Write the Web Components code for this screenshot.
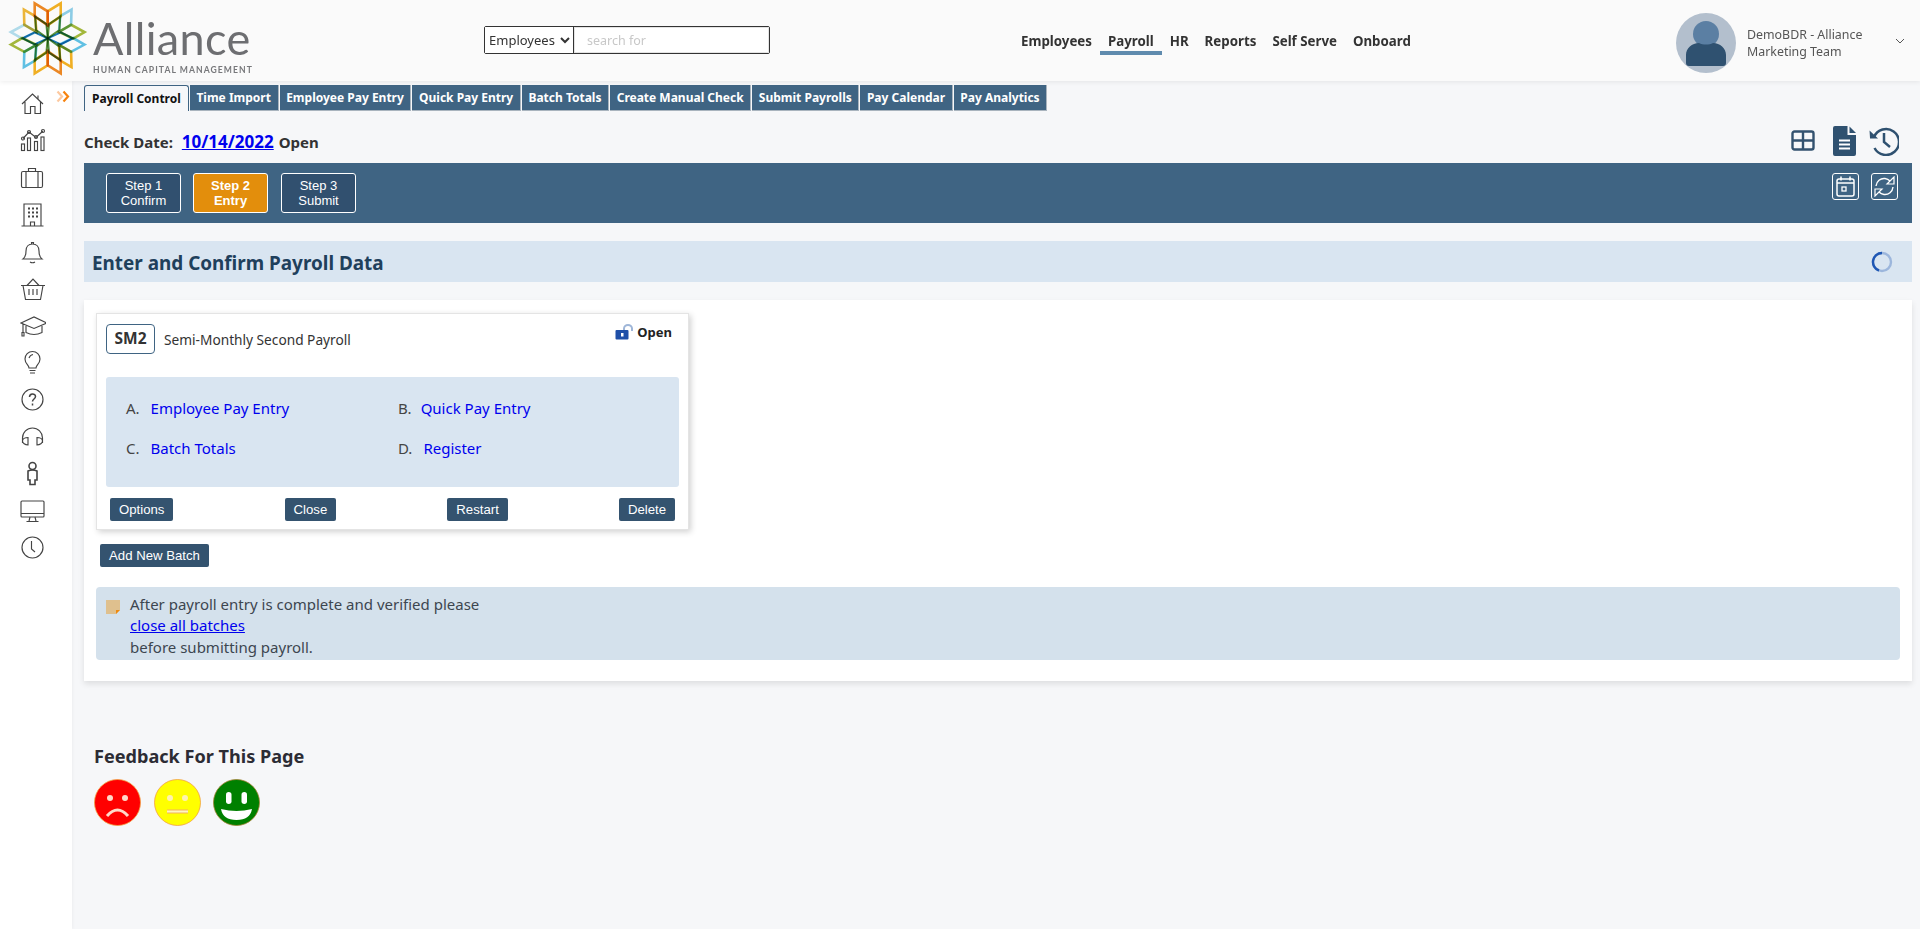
<!DOCTYPE html>
<html lang="en">

<head>
  <meta charset="UTF-8">
  <title>Payroll Control</title>
  <style>
    html, body { margin: 0; padding: 0; height: 100%; }
    body { background: #f6f7f9; font-family: "Noto Sans", "Liberation Sans", sans-serif; color: #333; overflow: hidden; }
  </style>
</head>

<body>
  <app-shell>
    <app-header slot="header"></app-header>
    <side-nav slot="side"></side-nav>
    <tab-bar></tab-bar>
    <check-row></check-row>
    <step-bar></step-bar>
    <section-band>Enter and Confirm Payroll Data</section-band>
    <work-panel>
      <batch-card code="SM2" name="Semi-Monthly Second Payroll"></batch-card>
      <dark-btn class="add">Add New Batch</dark-btn>
      <note-box></note-box>
    </work-panel>
    <page-feedback></page-feedback>
  </app-shell>

  <script>
    // small helper, every element just gets a shadow root with its html
    function shadowOf(el, html) {
      el.attachShadow({ mode: 'open' }).innerHTML = html;
    }

    class AppShell extends HTMLElement {
      connectedCallback() {
        shadowOf(this, `
          <style>
            :host { display: grid; grid-template-columns: 72px 1fr; grid-template-rows: 81px 1fr; height: 929px; }
            .top { grid-column: 1 / 3; position: relative; z-index: 2; }
            .main { padding: 4px 8px 0 12px; min-width: 0; }
          </style>
          <div class="top"><slot name="header"></slot></div>
          <slot name="side"></slot>
          <div class="main"><slot></slot></div>`);
      }
    }

    class AppHeader extends HTMLElement {
      connectedCallback() {
        // 12 petals: one parallelogram and its mirror, each turned in 60deg steps
        const yellowSet = ['#f5b324', '#a6bb3c', '#f5b324', '#f5b324', '#a6bb3c', '#f0b93a'];
        const orangeSet = ['#f08a24', '#8fd0ea', '#62c4e8', '#f08a24', '#62c4e8', '#b4e0ef'];
        let petals = '';
        for (let i = 0; i < 6; i++) {
          petals += `<use href="#petal" stroke="${yellowSet[i]}" transform="rotate(${i * 60})"/>`;
          petals += `<use href="#petal" stroke="${orangeSet[i]}" transform="rotate(${i * 60}) scale(-1 1)"/>`;
        }
        const inner = [[30, '#5f9a3e'], [150, '#4f8f3e'], [90, '#1a7db8']]
          .map(p => `<use href="#inner" stroke="${p[1]}" transform="rotate(${p[0]})"/>`).join('');
        shadowOf(this, `
          <style>
            :host { display: flex; align-items: flex-start; height: 81px; background: #fafafa; box-shadow: 0 1px 5px rgba(0,0,0,.08); }
            .logo { width: 260px; height: 81px; flex: none; display: flex; }
            .logo svg { width: 93px; height: 81px; flex: none; }
            .logo use { mix-blend-mode: multiply; }
            .brand { display: flex; flex-direction: column; padding-top: 15px; }
            .brand b { font: 400 45px/46px Lato, sans-serif; color: #6d6e71; letter-spacing: .35px; }
            .brand i { font: 700 8.600px/10px Lato, sans-serif; color: #77787b; letter-spacing: 1.050px; margin-top: 4px; white-space: nowrap; }
            .search { margin: 26px 0 0 224px; width: 286px; height: 28px; box-sizing: border-box; border: 1px solid #333; border-radius: 2px; display: flex; background: #fff; flex: none; }
            .search select { width: 89px; border: 0; border-right: 1px solid #333; background: #fff; font: 13px "Noto Sans", sans-serif; color: #333; padding: 0; outline: none; }
            .search input { flex: 1; min-width: 0; border: 1px solid #e4e4e4; font: 12.500px "Noto Sans", sans-serif; padding: 0 12px; outline: none; }
            .search input::placeholder { color: #c8c8c8; }
            nav { margin: 31px 0 0 251px; display: flex; gap: 16px; flex: none; font: 700 13.300px/20px "Noto Sans", sans-serif; color: #333; }
            nav span { position: relative; padding-bottom: 4px; white-space: nowrap; }
            nav .on::after { content: ""; position: absolute; left: -8px; right: -8px; bottom: 0; height: 4px; background: #5f8bae; }
            .user { margin: 13px 0 0 auto; display: flex; align-items: center; flex: none; height: 60px; padding-right: 15px; }
            .user svg.pic { width: 60px; height: 60px; }
            .user div { width: 132px; margin: 0 16px 0 11px; font: 12.400px/17px "Noto Sans", sans-serif; color: #555; }
            .user svg.chev { margin-top: -4px; }
          </style>
          <div class="logo">
            <svg viewBox="0 0 93 81">
              <defs>
                <path id="petal" d="M13 -35 V-22 L0 -13 V-27 Z" fill="none" stroke-width="2.600"/>
                <path id="inner" d="M0 0 L-6 -13 L0 -25 L6 -13 Z M0 0 L-6 13 L0 25 L6 13 Z" fill="none" stroke-width="2"/>
              </defs>
              <g transform="translate(47.700 38.300)">${petals}${inner}</g>
            </svg>
            <div class="brand"><b>Alliance</b><i>HUMAN CAPITAL MANAGEMENT</i></div>
          </div>
          <div class="search">
            <select><option>Employees</option></select>
            <input placeholder="search for">
          </div>
          <nav><span>Employees</span><span class="on">Payroll</span><span>HR</span><span>Reports</span><span>Self Serve</span><span>Onboard</span></nav>
          <div class="user">
            <svg class="pic" viewBox="0 0 60 60">
              <circle cx="30" cy="30" r="30" fill="#b3bfcd"/>
              <circle cx="30" cy="21" r="13" fill="#5b7fa3"/>
              <path d="M10 50 v-8 c0-7 6-12 13-12 c4 2 10 2 14 0 c7 0 13 5 13 12 v8 q0 3 -3 3 h-34 q-3 0 -3 -3z" fill="#2f5170"/>
            </svg>
            <div>DemoBDR - Alliance Marketing Team</div>
            <svg class="chev" width="10" height="6" viewBox="0 0 10 6"><path d="M1 1l4 4 4-4" fill="none" stroke="#555" stroke-width="1"/></svg>
          </div>`);
      }
    }

    class SideNav extends HTMLElement {
      connectedCallback() {
        const ic = [
          // home
          '<path d="M2 13 12.500 3 23 13M18 4.500v3.500M5 11v11.500h5.500v-7h4.500v7h5.500V11"/>',
          // chart
          '<g transform="translate(0 -2)"><path d="M3 12.500 9 6l7 5.500L23 5"/><circle cx="3" cy="12.500" r="1.500"/><circle cx="9" cy="6" r="1.500"/><circle cx="16" cy="11" r="1.500"/><circle cx="23" cy="5" r="1.500"/><rect x="1.500" y="18" width="3" height="6.500"/><rect x="7.500" y="12" width="3" height="12.500"/><rect x="14.500" y="15.500" width="3" height="9"/><rect x="21" y="11" width="3" height="13.500"/></g>',
          // briefcase
          '<rect x="1.500" y="6.500" width="21" height="16" rx="1.500"/><path d="M8.500 6.500V3.500h7v3M6 6.500v16M18 6.500v16"/>',
          // building
          '<path d="M4 24V2h17v22M1.500 24h22M10.500 24v-4h4v4"/><path stroke-width="2" d="M8 6.500h2M12 6.500h2M16 6.500h2M8 10.500h2M12 10.500h2M16 10.500h2M8 14.500h2M12 14.500h2M16 14.500h2"/>',
          // bell
          '<path d="M3 20c2.500-2 3-4 3-8 0-4 2.500-7 6.500-7s6.500 3 6.500 7c0 4 .5 6 3 8zM11.500 5V3.500h2V5M10 23q2.500 1.500 5 0"/>',
          // basket
          '<path d="M1 9.500h24M3 9.500l2.500 14h15l2.500-14M7 9.500 13 3l6 6.500M9 13v6M13 13v6M17 13v6"/>',
          // graduation cap
          '<path d="M1 10 14 4l13 6-13 5.500zM6 13v6.500q8 4 16 0V13M3 11v8.500M2 23v-3.500h2V23z"/>',
          // bulb
          '<path d="M9 18c0-3-4-4-4-9a7.500 7.500 0 0 1 15 0c0 5-4 6-4 9zM9.500 20.500h6M10 23h5"/><path d="M9 8q1-3 4-3.500"/>',
          // help
          '<circle cx="12.500" cy="12.500" r="10.500"/><path stroke-width="1.500" d="M9.500 10c0-4 6-4 6-.5 0 2.500-3 2.500-3 5M12.500 16.500v2"/>',
          // headphones
          '<path d="M2.500 19v-5a10 10 0 0 1 20 0v5M2.500 17c0-2 2.500-3.500 5.500-3.500V21c-3 0-5.500-2-5.500-4zM22.500 17c0-2-2.500-3.500-5.500-3.500V21c3 0 5.500-2 5.500-4z"/>',
          // person
          '<g stroke-width="1.600"><circle cx="12.500" cy="5" r="3.500"/><path d="M8 10q4.500-2 9 0v9h-2v4.500h-5V19H8z"/></g>',
          // monitor
          '<rect x="1" y="3" width="23" height="16" rx="1"/><path d="M1 15.500h23M10 19l-1 4M15 19l1 4M6.500 23.500h12"/>',
          // clock
          '<circle cx="12.500" cy="12.500" r="10.500"/><path d="M11.500 6v8l3.500 3"/>'
        ];
        shadowOf(this, `
          <style>
            :host { display: block; background: #fff; position: relative; box-shadow: 1px 0 3px rgba(0,0,0,.04); }
            ul { list-style: none; margin: 0; padding: 10px 0 0 20px; display: flex; flex-direction: column; gap: 11px; }
            li { width: 26px; height: 26px; }
            svg { display: block; width: 26px; height: 26px; fill: none; stroke: #444; stroke-width: 1.150; }
            .arrows { position: absolute; left: 56px; top: 9px; width: 14px; height: 13px; }
          </style>
          <svg class="arrows" viewBox="0 0 14 13" style="stroke-width:2.200">
            <path d="M1.500 1.500 6 6.500 1.500 11.500" stroke="#fdc9a0"/>
            <path d="M7.500 1.500 12 6.500 7.500 11.500" stroke="#f7830f"/>
          </svg>
          <ul>${ic.map(p => `<li><svg viewBox="0 0 26 26">${p}</svg></li>`).join('')}</ul>`);
      }
    }

    class TabBar extends HTMLElement {
      connectedCallback() {
        const tabs = ['Payroll Control', 'Time Import', 'Employee Pay Entry', 'Quick Pay Entry', 'Batch Totals',
          'Create Manual Check', 'Submit Payrolls', 'Pay Calendar', 'Pay Analytics'];
        shadowOf(this, `
          <style>
            :host { display: flex; gap: 1px; height: 26px; }
            span { box-sizing: border-box; height: 26px; padding: 0 6.600px; background: #3f6483; color: #fff; font: 700 12px/25px "Noto Sans", sans-serif; white-space: nowrap; border: 1px solid #a9b4be; border-width: 0 1px 1px 0; }
            span.on { background: #f6f7f9; color: #111; border: 1px solid #3f6483; border-bottom: 0; border-radius: 3px 3px 0 0; padding: 0 7px; }
          </style>
          ${tabs.map((t, i) => `<span class="${i ? '' : 'on'}">${t}</span>`).join('')}`);
      }
    }

    class CheckRow extends HTMLElement {
      connectedCallback() {
        shadowOf(this, `
          <style>
            :host { display: flex; align-items: flex-start; height: 52px; font: 700 15px/20px "Noto Sans", sans-serif; color: #333; }
            .txt { margin-top: 21px; white-space: nowrap; }
            a { color: #0000ee; font-size: 17px; margin: 0 1px 0 5px; }
            .icons { margin: 17px 13px 0 auto; display: flex; align-items: flex-start; }
            svg { display: block; }
          </style>
          <div class="txt">Check Date: <a href="#">10/14/2022</a> Open</div>
          <div class="icons">
            <svg width="24" height="22" viewBox="0 0 24 22" style="margin:2px 18px 0 0" fill="none" stroke="#33526f" stroke-width="2.400"><rect x="1.500" y="1.500" width="21" height="18" rx="2"/><path d="M1 10.500h22M12 1v19"/></svg>
            <svg width="23" height="30" viewBox="0 0 23 30" style="margin:-2px 13px 0 0"><path d="M2 0h12.500v9H23v19q0 2-2 2H2q-2 0-2-2V2q0-2 2-2z" fill="#2f5170"/><path d="M16.500 0.500 23 7h-6.500z" fill="#2f5170"/><path d="M6 14.500h11M6 18.500h11M6 22.500h11" stroke="#fff" stroke-width="2"/></svg>
            <svg width="30" height="30" viewBox="0 0 30 30" style="margin-top:-2px" fill="none" stroke="#2f5170"><path stroke-width="2.500" d="M5 11a13 13 0 1 1 .5 11"/><path d="M0.500 4.500 9 12.500H1z" fill="#2f5170" stroke="none"/><path stroke-width="2.500" d="M15 7v9l6 5"/></svg>
          </div>`);
      }
    }

    class StepBar extends HTMLElement {
      connectedCallback() {
        shadowOf(this, `
          <style>
            :host { display: flex; align-items: flex-start; height: 60px; background: #3f6483; box-sizing: border-box; padding: 10px 14px 0 22px; }
            .st { box-sizing: border-box; width: 75px; height: 40px; margin-right: 12px; border: 1px solid #fff; border-radius: 3px; background: #31506f; color: #fff; text-align: center; font: 13px/15px "Liberation Sans", sans-serif; padding-top: 4px; }
            .st.on { background: #e38e0c; font-weight: 700; margin-right: 13px; }
            .tools { margin-left: auto; display: flex; gap: 12px; }
            .tools span { box-sizing: border-box; width: 27px; height: 27px; border: 1px solid #fff; border-radius: 3px; display: flex; align-items: center; justify-content: center; }
          </style>
          <div class="st">Step 1<br>Confirm</div>
          <div class="st on">Step 2<br>Entry</div>
          <div class="st">Step 3<br>Submit</div>
          <div class="tools">
            <span><svg width="19" height="21" viewBox="0 0 19 21" fill="none" stroke="#fff" stroke-width="1.500"><rect x="1" y="3" width="17" height="17" rx="2"/><path d="M1 7h17M5 0.500v4M14 0.500v4"/><rect x="6" y="11" width="4" height="4" stroke-width="1.300"/></svg></span>
            <span><svg width="21" height="21" viewBox="0 0 21 21" fill="none" stroke="#fff" stroke-width="1.400"><path d="M2 10c.5-5 4.500-8 9-7.500q3 .5 5 2.500M19 11c-.5 5-4.500 8-9 7.500q-3-.5-5-2.500"/><path d="M20 1v7h-7zM1 20v-7h7z" stroke-width="1.200"/></svg></span>
          </div>`);
      }
    }

    class SectionBand extends HTMLElement {
      connectedCallback() {
        shadowOf(this, `
          <style>
            :host { display: flex; align-items: center; justify-content: space-between; box-sizing: border-box; height: 41px; margin-top: 18px; padding: 2px 19px 0 8px; background: #d9e5f1; color: #1f405c; font: 700 18.900px/24px "Noto Sans", sans-serif; }
            svg { margin-top: -2px; }
          </style>
          <slot></slot>
          <svg width="22" height="22" viewBox="0 0 22 22" fill="none" stroke-width="2.400"><circle cx="11" cy="11" r="9" stroke="#9cb6dc"/><path d="M11 2a9 9 0 0 0-3 17.500" stroke="#1f57b4"/></svg>`);
      }
    }

    class WorkPanel extends HTMLElement {
      connectedCallback() {
        shadowOf(this, `
          <style>
            :host { display: block; box-sizing: border-box; height: 381px; margin-top: 18px; padding: 13px 12px 0; background: #fff; box-shadow: 0 3px 6px rgba(0,0,0,.1); }
            ::slotted(.add) { margin: 14px 0 20px 4px; }
          </style>
          <slot></slot>`);
      }
    }

    class BatchCard extends HTMLElement {
      connectedCallback() {
        shadowOf(this, `
          <style>
            :host { display: block; box-sizing: border-box; width: 593px; height: 217px; padding: 10px 9px 0; border: 1px solid #e4e4e4; background: #fff; box-shadow: 2px 2px 6px rgba(0,0,0,.18); position: relative; }
            .head { display: flex; align-items: center; height: 30px; gap: 9px; font: 13.700px/18px "Noto Sans", sans-serif; color: #333; }
            .title { margin-top: 1px; }
            .code { box-sizing: border-box; width: 49px; height: 30px; border: 1px solid #3f6483; border-radius: 4px; text-align: center; font: 700 15.500px/27px "Noto Sans", sans-serif; }
            .state { margin: -15px 7px 0 auto; display: flex; align-items: center; gap: 4px; font-weight: 700; font-size: 13px; color: #222; }
            .links { box-sizing: border-box; height: 110px; margin-top: 23px; padding: 18px 20px 0; background: #d9e5f1; border-radius: 3px; display: grid; grid-template-columns: 272px 1fr; grid-auto-rows: 40px; font: 15px/26px "Noto Sans", sans-serif; color: #444; }
            .links div { display: flex; }
            .links b { font-weight: 400; }
            a { color: #0000ee; text-decoration: none; }
            .btns { display: flex; justify-content: space-between; padding: 11px 4px 0; }
          </style>
          <div class="head">
            <span class="code">${this.getAttribute('code')}</span>
            <span class="title">${this.getAttribute('name')}</span>
            <span class="state">
              <svg width="18" height="16" viewBox="0 0 18 16"><path d="M9 7V4.500a4 3.500 0 0 1 8 0V7" fill="none" stroke="#9fb6d8" stroke-width="2"/><rect x="0.500" y="6" width="13" height="9.500" rx="1" fill="#1f4fa8"/><rect x="6" y="9" width="2.500" height="3.500" fill="#fff"/></svg>
              Open
            </span>
          </div>
          <div class="links">
            <div><b>A.</b><a href="#" style="margin-left:11px">Employee Pay Entry</a></div>
            <div><b>B.</b><a href="#" style="margin-left:9px">Quick Pay Entry</a></div>
            <div><b>C.</b><a href="#" style="margin-left:11px">Batch Totals</a></div>
            <div><b>D.</b><a href="#" style="margin-left:11px">Register</a></div>
          </div>
          <div class="btns">
            <dark-btn>Options</dark-btn><dark-btn>Close</dark-btn><dark-btn>Restart</dark-btn><dark-btn>Delete</dark-btn>
          </div>`);
      }
    }

    class DarkBtn extends HTMLElement {
      connectedCallback() {
        shadowOf(this, `
          <style>
            :host { display: table; box-sizing: border-box; height: 23px; padding: 0 9px; background: #34536f; color: #fff; border-radius: 2px; font: 13.200px/23px "Liberation Sans", sans-serif; white-space: nowrap; }
          </style>
          <slot></slot>`);
      }
    }

    class NoteBox extends HTMLElement {
      connectedCallback() {
        shadowOf(this, `
          <style>
            :host { display: flex; box-sizing: border-box; height: 73px; padding: 7px 10px 0; background: #d4e1ec; border-radius: 4px; font: 15px/21.300px "Noto Sans", sans-serif; color: #3d4650; }
            svg { flex: none; margin: 6px 10px 0 0; }
            a { color: #0000ee; display: block; }
          </style>
          <svg width="14" height="14" viewBox="0 0 14 14"><path d="M0 0h14v10l-4 4H0z" fill="#dfc08e"/><path d="M10 14v-4h4z" fill="#ee8a10"/></svg>
          <div>After payroll entry is complete and verified please<a href="#">close all batches</a>before submitting payroll.</div>`);
      }
    }

    class PageFeedback extends HTMLElement {
      connectedCallback() {
        shadowOf(this, `
          <style>
            :host { display: block; padding: 62px 0 0 10px; font: 700 18.100px/26px "Noto Sans", sans-serif; color: #2c2c34; }
            .row { display: flex; gap: 12.500px; margin-top: 10px; }
            svg { display: block; width: 47px; height: 47px; }
          </style>
          <div>Feedback For This Page</div>
          <div class="row">
            <svg viewBox="0 0 47 47"><circle cx="23.500" cy="23.500" r="23" fill="#f00" stroke="#f2a040" stroke-width=".8"/><circle cx="16" cy="19" r="3" fill="#ffd9c9"/><circle cx="31" cy="19" r="3" fill="#ffd9c9"/><path d="M13 37q10.500-12 21 0" fill="none" stroke="#ffd9c9" stroke-width="3"/></svg>
            <svg viewBox="0 0 47 47"><circle cx="23.500" cy="23.500" r="23" fill="#ff0" stroke="#f2a040" stroke-width=".8"/><circle cx="16" cy="19" r="3" fill="#fff2b0"/><circle cx="31" cy="19" r="3" fill="#fff2b0"/><path d="M13 32.500h21" stroke="#f2b060" stroke-width="4"/><path d="M13 32.500h21" stroke="#fff6c0" stroke-width="2"/></svg>
            <svg viewBox="0 0 47 47"><circle cx="23.500" cy="23.500" r="23" fill="#008000" stroke="#a08030" stroke-width=".8"/><rect x="13" y="13" width="5.500" height="12" rx="2.750" fill="#fff"/><rect x="28.500" y="13" width="5.500" height="12" rx="2.750" fill="#fff"/><path d="M8 30q15.500 4 31 0q-2 11-15.500 11T8 30z" fill="#fff"/></svg>
          </div>`);
      }
    }

    customElements.define('app-shell', AppShell);
    customElements.define('app-header', AppHeader);
    customElements.define('side-nav', SideNav);
    customElements.define('tab-bar', TabBar);
    customElements.define('check-row', CheckRow);
    customElements.define('step-bar', StepBar);
    customElements.define('section-band', SectionBand);
    customElements.define('work-panel', WorkPanel);
    customElements.define('batch-card', BatchCard);
    customElements.define('dark-btn', DarkBtn);
    customElements.define('note-box', NoteBox);
    customElements.define('page-feedback', PageFeedback);
  </script>
</body>

</html>
